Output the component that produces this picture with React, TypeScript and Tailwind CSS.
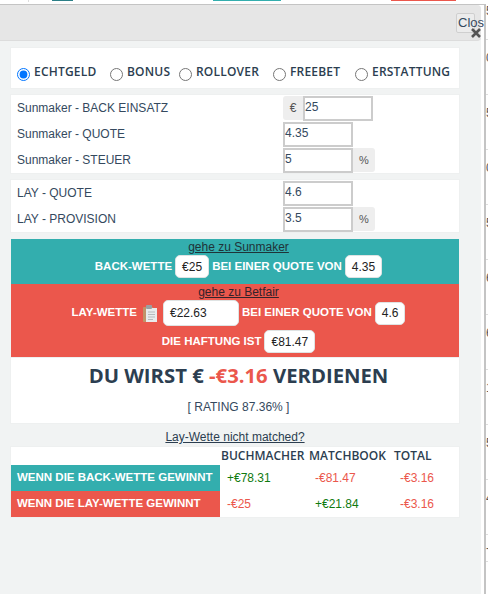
import React from 'react';

const radios = [
  { label: 'ECHTGELD', width: 'w-[93px]' },
  { label: 'BONUS', width: 'w-[69px]' },
  { label: 'ROLLOVER', width: 'w-[94px]' },
  { label: 'FREEBET', width: 'w-[82px]' },
  { label: 'ERSTATTUNG', width: 'w-[94px]' },
];
const sideDigits = ['0', '5', '0', '5', '6', '6', '1', '5', '4'];

function Chip({ children, className = '' }: { children: React.ReactNode; className?: string }) {
  return (
    <span className={`inline-flex h-[23px] items-center justify-center rounded-[5px] border border-[#dfe3e3] bg-white px-[6px] text-[12px] font-normal text-[#222] ${className}`}>
      {children}
    </span>
  );
}

function Row({ label, value, before, after }: { label: string; value: string; before?: string; after?: string }) {
  return (
    <div className="flex h-[26px] items-center">
      <span className="w-[266px] text-[12px] text-[#34495e]">{label}</span>
      {before && (
        <span className="flex h-[24px] w-[20px] items-center justify-center rounded-l-[3px] bg-[#eeeeee] text-[12px] text-[#555]">{before}</span>
      )}
      <input
        readOnly
        value={value}
        className="h-[25px] w-[70px] border-2 border-[#cccccc] bg-white pb-[2px] text-[12px] text-[#34495e] outline-none"
      />
      {after && (
        <span className="flex h-[24px] w-[22px] items-center justify-center rounded-r-[3px] bg-[#eeeeee] text-[11px] text-[#555]">{after}</span>
      )}
    </div>
  );
}

function Clipboard() {
  return (
    <svg width="14" height="17" viewBox="0 0 14 17" className="mx-[3px] shrink-0">
      <rect x="0" y="2" width="10" height="15" rx="1" fill="#c09468" />
      <rect x="3" y="3" width="11" height="14" fill="#e9ecec" />
      <rect x="3" y="0" width="6" height="4" rx="1" fill="#9aa0a3" />
      <path d="M5 7h7M5 9.5h7M5 12h7M5 14.5h5" stroke="#b6bbbd" strokeWidth="1" />
    </svg>
  );
}

export default function App() {
  return (
    <div className="flex h-[594px] w-[488px] flex-col overflow-hidden bg-white font-['Liberation_Sans',Arial,sans-serif]">
      {/* page behind the modal, only a sliver shows on top */}
      <div className="flex h-[4px] shrink-0">
        <div className="h-[2px] w-[29px] border-r border-[#ddd]" />
        <div className="ml-[23px] h-[1px] w-[21px] bg-[#2c7f87]" />
        <div className="ml-[140px] h-[1px] w-[68px] bg-[#33aeae]" />
        <div className="ml-[110px] h-[1px] w-[65px] bg-[#eb574c]" />
      </div>

      <div className="flex min-h-0 flex-1">
        {/* modal */}
        <div className="relative flex w-[484px] shrink-0 flex-col border-t border-[#c4c4c4] bg-white">
          <div className="flex h-full w-[481px] flex-col rounded-tr-[4px] bg-[#f1f3f3]">
            <div className="h-[36px] shrink-0 rounded-tr-[4px] rounded-br-[4px] border-b border-[#dcdcdc] bg-[#e6e6e6]" />

            <div className="ml-[11px] flex w-[448px] flex-col pt-[7px]">
              <div className="flex h-[40px] items-end bg-white pb-[7px] pl-[6px] shadow-[0_0_0_1px_#eef0f0]">
                {radios.map((r, i) => (
                  <label key={r.label} className={`flex items-center gap-[4px] text-[12px] font-semibold tracking-[0.2px] text-[#2c3e50] font-['Open_Sans',sans-serif] ${r.width}`}>
                    <input type="radio" name="mode" defaultChecked={i === 0} className="mt-[3px] h-[13px] w-[13px] shrink-0" />
                    <span className="-mt-[2px]">{r.label}</span>
                  </label>
                ))}
              </div>

              <div className="mt-[7px] bg-white pl-[6px] shadow-[0_0_0_1px_#eef0f0]">
                <Row label="Sunmaker - BACK EINSATZ" value="25" before="€" />
                <Row label="Sunmaker - QUOTE" value="4.35" />
                <Row label="Sunmaker - STEUER" value="5" after="%" />
              </div>

              <div className="mt-[7px] bg-white pl-[6px] shadow-[0_0_0_1px_#eef0f0]">
                <Row label="LAY - QUOTE" value="4.6" />
                <Row label="LAY - PROVISION" value="3.5" after="%" />
              </div>

              <div className="mt-[7px] flex h-[45px] flex-col items-center bg-[#33aeae] pl-[7px] text-[11.5px] font-bold text-white">
                <a className="h-[16px] text-[12px] font-normal leading-[16px] text-[#1f3338] underline">gehe zu Sunmaker</a>
                <div className="flex items-center gap-[3px]">
                  <span>BACK-WETTE</span>
                  <Chip>€25</Chip>
                  <span>BEI EINER QUOTE VON</span>
                  <Chip>4.35</Chip>
                </div>
              </div>

              <div className="flex h-[74px] flex-col items-center bg-[#eb574c] pl-[7px] text-[11.5px] font-bold text-white">
                <a className="h-[16px] text-[12px] font-normal leading-[16px] text-[#33222a] underline">gehe zu Betfair</a>
                <div className="flex items-center gap-[3px]">
                  <span>LAY-WETTE</span>
                  <Clipboard />
                  <Chip className="!h-[26px] w-[76px] !justify-start">€22.63</Chip>
                  <span>BEI EINER QUOTE VON</span>
                  <Chip>4.6</Chip>
                </div>
                <div className="mt-[4px] flex items-center gap-[3px]">
                  <span>DIE HAFTUNG IST</span>
                  <Chip>€81.47</Chip>
                </div>
              </div>

              <div className="flex h-[65px] flex-col items-center bg-white pl-[7px] shadow-[0_0_0_1px_#eef0f0]">
                <div className="mt-[2px] text-[20.3px] font-bold leading-[30px] text-[#2c3e50] font-['Open_Sans',sans-serif]">
                  DU WIRST € <span className="text-[#eb574c]">-€3.16</span> VERDIENEN
                </div>
                <div className="mt-[8px] text-[12px] text-[#34495e]">[ RATING 87.36% ]</div>
              </div>

              <a className="mt-[5px] h-[19px] text-center text-[12px] leading-[19px] text-[#2c3e50] underline">Lay-Wette nicht matched?</a>

              <div className="bg-white shadow-[0_0_0_1px_#eef0f0]">
                <div className="flex h-[18px] items-center text-[12px] font-semibold text-[#2c3e50] font-['Open_Sans',sans-serif]">
                  <span className="ml-[210px] w-[88px]">BUCHMACHER</span>
                  <span className="w-[85px]">MATCHBOOK</span>
                  <span>TOTAL</span>
                </div>
                <div className="flex h-[26px] items-center text-[12px]">
                  <span className="flex h-full w-[209px] items-center whitespace-nowrap bg-[#33aeae] pl-[6px] text-[11.5px] font-bold text-white">WENN DIE BACK-WETTE GEWINNT</span>
                  <span className="ml-[7px] w-[88px] text-[#0f7a0f]">+€78.31</span>
                  <span className="w-[85px] text-[#eb574c]">-€81.47</span>
                  <span className="text-[#eb574c]">-€3.16</span>
                </div>
                <div className="flex h-[26px] items-center text-[12px]">
                  <span className="flex h-full w-[209px] items-center whitespace-nowrap bg-[#eb574c] pl-[6px] text-[11.5px] font-bold text-white">WENN DIE LAY-WETTE GEWINNT</span>
                  <span className="ml-[7px] w-[88px] text-[#eb574c]">-€25</span>
                  <span className="w-[85px] text-[#0f7a0f]">+€21.84</span>
                  <span className="text-[#eb574c]">-€3.16</span>
                </div>
              </div>
            </div>
          </div>

          {/* close button + x sit on the header corner */}
          <div className="absolute left-[456px] top-[8px] flex h-[20px] w-[28px] items-center overflow-hidden">
            <span className="flex h-[20px] w-[19px] items-center rounded-[2px] border border-[#cfcfcf] bg-[#ececec] pl-[1px] text-[13px] text-[#34495e]">
              <span className="whitespace-nowrap">Close</span>
            </span>
          </div>
          <svg width="10" height="10" viewBox="0 0 10 10" className="absolute left-[471px] top-[23px]">
            <path d="M1 1l8 8M9 1l-8 8" stroke="#555" strokeWidth="2.6" />
          </svg>
        </div>

        {/* edge of the table behind the modal */}
        <div className="flex w-[4px] flex-col border-l-2 border-[#c4c4c4] text-[12px] leading-[14px] text-[#555]">
          <div className="h-[36px] shrink-0 overflow-hidden border-b border-[#dddddd]">5</div>
          {sideDigits.map((d, i) => (
            <div key={i} className="h-[55px] shrink-0 overflow-hidden border-b border-[#dddddd] pt-[11px]">
              {d}
            </div>
          ))}
          <div className="h-[27px] shrink-0 overflow-hidden border-b border-[#dddddd] pt-[6px]">-</div>
        </div>
      </div>
    </div>
  );
}
